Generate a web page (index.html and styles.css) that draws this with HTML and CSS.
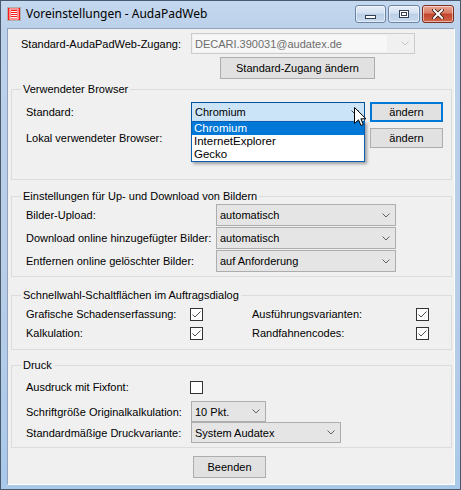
FILE: index.html
```html
<!DOCTYPE html>
<html lang="de">
<head>
<meta charset="utf-8">
<title>Voreinstellungen - AudaPadWeb</title>
<link rel="stylesheet" href="styles.css">
</head>
<body>
<div class="window">
  <div class="titlebar">
    <svg class="appicon" viewBox="0 0 14 14" width="14" height="14">
      <rect x="0.5" y="0.5" width="13" height="13" fill="#ff1a1a" stroke="#b0b0b0"/>
      <rect x="3" y="2" width="8" height="10" fill="none" stroke="#fff" stroke-width="1"/>
      <line x1="4" y1="4.5" x2="10" y2="4.5" stroke="#fff"/>
      <line x1="4" y1="6.5" x2="10" y2="6.5" stroke="#fff"/>
      <line x1="4" y1="8.5" x2="10" y2="8.5" stroke="#fff"/>
      <line x1="4" y1="10.5" x2="10" y2="10.5" stroke="#fff"/>
    </svg>
    <span class="title">Voreinstellungen - AudaPadWeb</span>
    <div class="caption-buttons">
      <div class="cbtn cmin"><span class="min-glyph"></span></div>
      <div class="cbtn cmax"><span class="max-glyph"></span></div>
      <div class="cbtn cclose">
        <svg viewBox="0 0 12 10" width="12" height="10">
          <path d="M2,1 L10,9 M10,1 L2,9" stroke="#3a1a12" stroke-width="3.6" stroke-linecap="square"/>
          <path d="M2,1 L10,9 M10,1 L2,9" stroke="#fff" stroke-width="2" stroke-linecap="square"/>
        </svg>
      </div>
    </div>
  </div>

  <div class="client">
    <div class="toprow">
      <span class="label toplabel">Standard-AudaPadWeb-Zugang:</span>
      <div class="combo disabled combo-top">
        <span class="ctext">DECARI.390031@audatex.de</span>
        <svg class="chev" viewBox="0 0 8 5" width="8" height="5"><polyline points="0.5,0.5 4,4 7.5,0.5" fill="none" stroke="#c4c4c4"/></svg>
      </div>
    </div>
    <div class="btn btn-zugang">Standard-Zugang ändern</div>

    <fieldset class="group g1">
      <legend>Verwendeter Browser</legend>
      <div class="brow">
        <span class="label">Standard:</span>
        <div class="combo focus">
          <span class="ctext">Chromium</span>
          <svg class="chev" viewBox="0 0 8 5" width="8" height="5"><polyline points="0.5,0.5 4,4 7.5,0.5" fill="none" stroke="#404040"/></svg>
          <div class="droplist">
            <div class="ditem selected">Chromium</div>
            <div class="ditem">InternetExplorer</div>
            <div class="ditem">Gecko</div>
          </div>
        </div>
        <div class="btn default">ändern</div>
      </div>
      <div class="brow">
        <span class="label">Lokal verwendeter Browser:</span>
        <span></span>
        <div class="btn">ändern</div>
      </div>
    </fieldset>

    <fieldset class="group g2">
      <legend>Einstellungen für Up- und Download von Bildern</legend>
      <div class="irow">
        <span class="label">Bilder-Upload:</span>
        <div class="combo"><span class="ctext">automatisch</span><svg class="chev" viewBox="0 0 8 5" width="8" height="5"><polyline points="0.5,0.5 4,4 7.5,0.5" fill="none" stroke="#606060"/></svg></div>
      </div>
      <div class="irow">
        <span class="label">Download online hinzugefügter Bilder:</span>
        <div class="combo"><span class="ctext">automatisch</span><svg class="chev" viewBox="0 0 8 5" width="8" height="5"><polyline points="0.5,0.5 4,4 7.5,0.5" fill="none" stroke="#606060"/></svg></div>
      </div>
      <div class="irow">
        <span class="label">Entfernen online gelöschter Bilder:</span>
        <div class="combo"><span class="ctext">auf Anforderung</span><svg class="chev" viewBox="0 0 8 5" width="8" height="5"><polyline points="0.5,0.5 4,4 7.5,0.5" fill="none" stroke="#606060"/></svg></div>
      </div>
    </fieldset>

    <fieldset class="group g3">
      <legend>Schnellwahl-Schaltflächen im Auftragsdialog</legend>
      <div class="crow">
        <span class="label">Grafische Schadenserfassung:</span>
        <span class="check on"><svg viewBox="0 0 11 11" width="11" height="11"><polyline points="1.5,5.5 4,8 9.5,2.5" fill="none" stroke="#4d4d4d"/></svg></span>
        <span class="label">Ausführungsvarianten:</span>
        <span class="check on"><svg viewBox="0 0 11 11" width="11" height="11"><polyline points="1.5,5.5 4,8 9.5,2.5" fill="none" stroke="#4d4d4d"/></svg></span>
      </div>
      <div class="crow">
        <span class="label">Kalkulation:</span>
        <span class="check on"><svg viewBox="0 0 11 11" width="11" height="11"><polyline points="1.5,5.5 4,8 9.5,2.5" fill="none" stroke="#4d4d4d"/></svg></span>
        <span class="label">Randfahnencodes:</span>
        <span class="check on"><svg viewBox="0 0 11 11" width="11" height="11"><polyline points="1.5,5.5 4,8 9.5,2.5" fill="none" stroke="#4d4d4d"/></svg></span>
      </div>
    </fieldset>

    <fieldset class="group g4">
      <legend>Druck</legend>
      <div class="drow first">
        <span class="label">Ausdruck mit Fixfont:</span>
        <span class="check"></span>
      </div>
      <div class="drow combo-row">
        <span class="label">Schriftgröße Originalkalkulation:</span>
        <div class="combo combo-pkt"><span class="ctext">10 Pkt.</span><svg class="chev" viewBox="0 0 8 5" width="8" height="5"><polyline points="0.5,0.5 4,4 7.5,0.5" fill="none" stroke="#606060"/></svg></div>
      </div>
      <div class="drow combo-row">
        <span class="label">Standardmäßige Druckvariante:</span>
        <div class="combo combo-druck"><span class="ctext">System Audatex</span><svg class="chev" viewBox="0 0 8 5" width="8" height="5"><polyline points="0.5,0.5 4,4 7.5,0.5" fill="none" stroke="#606060"/></svg></div>
      </div>
    </fieldset>

    <div class="btn btn-beenden">Beenden</div>
  </div>

  <svg class="cursor" viewBox="0 0 13 20" width="13" height="20">
    <path d="M0.5,0.5 L0.5,16.5 L4.5,12.8 L7,18.5 L9.3,17.5 L6.9,11.8 L12,11.8 Z" fill="#fff" stroke="#000" stroke-width="1" stroke-linejoin="miter"/>
  </svg>
</div>
</body>
</html>
```

FILE: styles.css
```css
* { box-sizing: border-box; }
html, body { margin: 0; padding: 0; }
body {
  width: 461px;
  height: 490px;
  overflow: hidden;
  font-family: "Liberation Sans", Arial, sans-serif;
  font-size: 11px;
  color: #000;
}

.window {
  position: relative;
  width: 461px;
  height: 490px;
  border: 1px solid #4a5a6c;
  background: linear-gradient(to bottom, #c4d8ef 0, #bcd1ea 28px, #b7cde8 60%, #a9c9ea 100%);
  padding: 0 5px 4px 6px;
  display: flex;
  flex-direction: column;
}

.titlebar {
  height: 27px;
  display: flex;
  align-items: flex-start;
  flex-shrink: 0;
}
.appicon { margin-top: 6px; flex-shrink: 0; }
.title {
  margin-left: 5px;
  margin-top: 5px;
  font-family: "Noto Sans", "Liberation Sans", sans-serif;
  font-size: 12px;
  line-height: 16px;
  color: #000;
  white-space: nowrap;
}
.caption-buttons {
  margin-left: auto;
  margin-right: 1px;
  margin-top: 4px;
  display: flex;
  gap: 2px;
}
.cbtn {
  width: 31px;
  height: 18px;
  border: 1px solid #6c84a3;
  border-radius: 3px;
  background: linear-gradient(to bottom, #e6eef8 0, #d3e1f1 45%, #bacee7 50%, #c9dbef 100%);
  display: flex;
  align-items: center;
  justify-content: center;
  box-shadow: inset 0 0 0 1px rgba(255,255,255,0.5);
}
.cmax { width: 32px; }
.cclose {
  width: 32px;
  border-color: #7e2d1e;
  background: linear-gradient(to bottom, #e8a795 0, #d87964 45%, #c2432b 50%, #d1674d 100%);
}
.min-glyph {
  display: block;
  width: 11px;
  height: 4px;
  margin-top: 5px;
  background: #fff;
  border: 1px solid #34404f;
}
.max-glyph {
  display: block;
  width: 10px;
  height: 8px;
  border: 1px solid #34404f;
  background: #fff;
  box-shadow: inset 0 0 0 1px #fff, inset 0 0 0 2px #34404f;
}

.client {
  flex: 1;
  background: #f0f0f0;
  border: 1px solid;
  border-color: #8fa3bc #ffffff #ffffff #8fa3bc;
  display: flex;
  flex-direction: column;
  align-items: flex-start;
}

.label { white-space: nowrap; }

.toprow {
  display: flex;
  align-items: center;
  margin-top: 4px;
  height: 21px;
  padding-left: 13px;
}
.toplabel { width: 170px; }

.combo {
  position: relative;
  display: flex;
  align-items: center;
  height: 22px;
  border: 1px solid #adadad;
  background: #e5e5e5;
  padding-left: 3px;
  padding-right: 5px;
}
.combo .ctext { flex: 1; white-space: nowrap; }
.combo .chev { flex-shrink: 0; }
.combo.disabled {
  border-color: #cccccc;
  background: #f0f0f0;
  color: #6d6d6d;
  padding-left: 1px;
}
.combo.disabled .ctext {
  background: #f7f7f7;
  margin-right: 14px;
  align-self: stretch;
  display: flex;
  align-items: center;
  padding-left: 2px;
  margin-top: 1px;
  margin-bottom: 1px;
}
.combo-top { width: 224px; height: 21px; }
.combo.focus {
  background: #cce4f7;
  border-color: #005499;
  height: 20px;
}

.btn {
  display: flex;
  align-items: center;
  justify-content: center;
  height: 20px;
  border: 1px solid #adadad;
  background: #e1e1e1;
  white-space: nowrap;
}
.btn.default {
  border-color: #0078d7;
  box-shadow: inset 0 0 0 1px #0078d7;
}
.btn-zugang {
  margin-top: 3px;
  margin-left: 212px;
  width: 155px;
  height: 22px;
}
.btn-beenden {
  margin-top: 8px;
  margin-left: 185px;
  width: 73px;
  height: 22px;
}

.group {
  margin: 0 2px 0 3px;
  width: 441px;
  border: 1px solid #dcdcdc;
  padding: 0 0 0 14px;
  min-width: 0;
}
.group legend {
  padding: 0 2px;
  margin-left: -5px;
  line-height: 13px;
  height: 13px;
  font-size: 11px;
}

.g1 { margin-top: 4px; padding-top: 6px; padding-bottom: 31px; }
.brow {
  display: grid;
  grid-template-columns: 165px 174px 78px;
  align-items: center;
  height: 20px;
}
.brow .btn { width: 73px; justify-self: end; }
.brow + .brow { margin-top: 6px; }
.droplist {
  position: absolute;
  left: -1px;
  top: 100%;
  width: 174px;
  height: 41px;
  background: #fff;
  border: 1px solid #0a5fb0;
  box-shadow: 2px 2px 3px rgba(0,0,0,0.35);
  z-index: 5;
  color: #000;
}
.ditem {
  height: 13px;
  line-height: 13px;
  padding-left: 2px;
  white-space: nowrap;
  font-size: 11.5px;
}
.ditem.selected { background: #0078d7; color: #fff; }

.g2 { margin-top: 10px; padding-top: 1px; padding-bottom: 4px; }
.irow {
  display: grid;
  grid-template-columns: 190px 180px;
  align-items: center;
  height: 22px;
}
.irow + .irow { margin-top: 1px; }

.g3 { margin-top: 12px; padding-top: 3px; padding-bottom: 7px; }
.crow {
  display: grid;
  grid-template-columns: 164px 62px 164px 13px;
  align-items: center;
  height: 18px;
}
.crow + .crow { margin-top: 1px; }

.check {
  display: flex;
  align-items: center;
  justify-content: center;
  width: 13px;
  height: 13px;
  border: 1px solid #333333;
  background: #ffffff;
}

.g4 { margin-top: 9px; padding-top: 5px; padding-bottom: 4px; }
.drow {
  display: grid;
  grid-template-columns: 164px auto;
  align-items: center;
  justify-content: start;
}
.drow.first { height: 20px; }
.drow.combo-row { grid-template-columns: 165px auto; height: 21px; }
.drow.first + .drow { margin-top: 4px; }
.combo-pkt { width: 75px; height: 21px; }
.combo-druck { width: 150px; height: 21px; }

.cursor {
  position: absolute;
  left: 353px;
  top: 106px;
  z-index: 10;
}
```
